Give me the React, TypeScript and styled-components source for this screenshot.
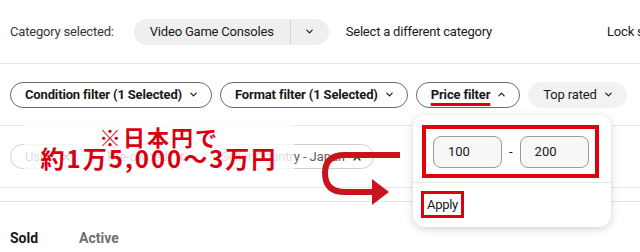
import React from 'react';
import styled, { createGlobalStyle } from 'styled-components';

const GlobalStyle = createGlobalStyle`
  html, body {
    margin: 0;
    padding: 0;
    background: #ffffff;
  }
  body {
    font-family: Roboto, "Liberation Sans", sans-serif;
    color: #191919;
  }
`;

const Page = styled.div`
  position: relative;
  width: 640px;
  height: 252px;
  overflow: hidden;
`;

const CategoryRow = styled.div`
  display: flex;
  align-items: center;
  height: 63px;
  padding: 0 10px;
  border-bottom: 1px solid #e5e5e5;
  white-space: nowrap;
  font-size: 13px;
  letter-spacing: -0.2px;
`;

const Label = styled.span`
  color: #363636;
  flex-shrink: 0;
`;

const CategoryPill = styled.div`
  display: flex;
  align-items: stretch;
  height: 26px;
  margin-left: 20px;
  flex-shrink: 0;
`;

const PillText = styled.span`
  display: flex;
  align-items: center;
  padding: 0 16px;
  background: #efefef;
  border-radius: 13px 0 0 13px;
  color: #191919;
`;

const PillToggle = styled.span`
  display: flex;
  align-items: center;
  justify-content: center;
  width: 38px;
  background: #efefef;
  border-left: 1px solid #d6d6d6;
  border-radius: 0 13px 13px 0;
`;

const LinkText = styled.span<{ $gap: number }>`
  margin-left: ${(p) => p.$gap}px;
  color: #191919;
  flex-shrink: 0;
`;

const FilterRow = styled.div`
  display: flex;
  align-items: center;
  gap: 8px;
  height: 61px;
  padding: 0 10px;
  border-bottom: 1px solid #e5e5e5;
  white-space: nowrap;
`;

const Chip = styled.button<{ $flat?: boolean }>`
  display: flex;
  align-items: center;
  gap: 7px;
  height: 26px;
  padding: 0 13px 0 14px;
  border: 1px solid ${(p) => (p.$flat ? '#f2f2f2' : '#6b6b6b')};
  border-radius: 13px;
  background: ${(p) => (p.$flat ? '#f2f2f2' : '#ffffff')};
  color: #191919;
  font-family: Roboto, "Liberation Sans", sans-serif;
  font-size: 13px;
  font-weight: ${(p) => (p.$flat ? 400 : 700)};
  letter-spacing: -0.15px;
  flex-shrink: 0;
`;

const Marked = styled.span`
  text-decoration: underline;
  text-decoration-color: #e0000b;
  text-decoration-thickness: 3px;
  text-underline-offset: 4px;
`;

const AppliedRow = styled.div`
  display: flex;
  align-items: center;
  gap: 9px;
  height: 61px;
  padding: 0 10px;
  border-bottom: 1px solid #e5e5e5;
  white-space: nowrap;
`;

const AppliedChip = styled.span`
  display: flex;
  align-items: center;
  gap: 7px;
  height: 25px;
  box-sizing: border-box;
  padding: 0 11px 0 14px;
  border: 1px solid #d0d0d0;
  border-radius: 13px;
  color: #5e5e5e;
  font-size: 13px;
  letter-spacing: -0.1px;
  flex-shrink: 0;
`;

const Tabs = styled.div`
  display: flex;
  gap: 41px;
  margin-top: 13px;
  padding: 28px 10px 0;
  border-top: 1px solid #e5e5e5;
  font-size: 14px;
  font-weight: 700;
  line-height: 16px;
`;

const Tab = styled.span<{ $active?: boolean }>`
  color: ${(p) => (p.$active ? '#191919' : '#707070')};
`;

const Popup = styled.div`
  position: absolute;
  left: 413px;
  top: 115px;
  width: 198px;
  height: 112px;
  box-sizing: border-box;
  background: #ffffff;
  border-radius: 12px;
  box-shadow: 0 2px 8px rgba(0, 0, 0, 0.18);
  padding-top: 10px;
`;

const RangeBox = styled.div`
  display: flex;
  align-items: center;
  gap: 7px;
  width: 177px;
  height: 53px;
  box-sizing: border-box;
  margin-left: 9px;
  padding: 0 4px 0 7px;
  border: 4px solid #e0000b;
`;

const PriceInput = styled.div`
  display: flex;
  align-items: center;
  width: 69px;
  height: 32px;
  box-sizing: border-box;
  padding-left: 14px;
  background: #f7f7f7;
  border: 1px solid #999999;
  border-radius: 8px;
  font-size: 13px;
  color: #191919;
`;

const Dash = styled.span`
  font-size: 13px;
  color: #191919;
`;

const Divider = styled.div`
  margin-top: 4px;
  height: 1px;
  background: #e5e5e5;
`;

const ApplyBox = styled.div`
  display: inline-flex;
  align-items: center;
  height: 27px;
  box-sizing: border-box;
  margin: 8px 0 0 8px;
  padding: 0 3px;
  border: 3px solid #e0000b;
  font-size: 13px;
  letter-spacing: -0.3px;
  color: #191919;
`;

const Note = styled.div`
  position: absolute;
  left: 24px;
  top: 114px;
  width: 270px;
  height: 66px;
  display: flex;
  flex-direction: column;
  align-items: center;
  justify-content: center;
  background: rgba(255, 255, 255, 0.78);
  color: #d7000f;
  font-family: "Noto Sans CJK JP", sans-serif;
  font-weight: 700;
  line-height: 22px;
`;

const NoteLine = styled.span<{ $size: number; $spacing: number }>`
  font-size: ${(p) => p.$size}px;
  letter-spacing: ${(p) => p.$spacing}px;
`;

const Arrow = styled.svg`
  position: absolute;
  left: 310px;
  top: 140px;
`;

const Chevron = ({ up = false, size = 9 }: { up?: boolean; size?: number }) => (
  <svg width={size} height={size} viewBox="0 0 10 10" fill="none">
    <path
      d={up ? 'M2 6.5L5 3.5L8 6.5' : 'M2 3.5L5 6.5L8 3.5'}
      stroke="#191919"
      strokeWidth="1.3"
      strokeLinecap="round"
      strokeLinejoin="round"
    />
  </svg>
);

const Cross = () => (
  <svg width="10" height="10" viewBox="0 0 10 10" fill="none">
    <path d="M2 2L8 8M8 2L2 8" stroke="#191919" strokeWidth="1.3" strokeLinecap="round" />
  </svg>
);

const App: React.FC = () => {
  return (
    <Page>
      <GlobalStyle />
      <CategoryRow>
        <Label>Category selected:</Label>
        <CategoryPill>
          <PillText>Video Game Consoles</PillText>
          <PillToggle>
            <Chevron />
          </PillToggle>
        </CategoryPill>
        <LinkText $gap={17}>Select a different category</LinkText>
        <LinkText $gap={115}>Lock selection</LinkText>
      </CategoryRow>

      <FilterRow>
        <Chip>
          Condition filter (1 Selected) <Chevron />
        </Chip>
        <Chip>
          Format filter (1 Selected) <Chevron />
        </Chip>
        <Chip>
          <Marked>Price filter</Marked> <Chevron up />
        </Chip>
        <Chip $flat>
          Top rated <Chevron />
        </Chip>
      </FilterRow>

      <AppliedRow>
        <AppliedChip>
          Used <Cross />
        </AppliedChip>
        <AppliedChip>
          Pre-owned <Cross />
        </AppliedChip>
        <AppliedChip>
          Seller Country - Japan <Cross />
        </AppliedChip>
      </AppliedRow>

      <Tabs>
        <Tab $active>Sold</Tab>
        <Tab>Active</Tab>
      </Tabs>

      <Note>
        <NoteLine $size={22} $spacing={2}>※日本円で</NoteLine>
        <NoteLine $size={24} $spacing={2}>約1万5,000〜3万円</NoteLine>
      </Note>

      <Arrow width="90" height="70" viewBox="0 0 90 70">
        <path
          d="M100 15 H35 Q15 15 15 33 Q15 52 35 52 H64"
          fill="none"
          stroke="#c8141c"
          strokeWidth="6"
        />
        <polygon points="62,39 79,52 62,65" fill="#c8141c" />
      </Arrow>

      <Popup>
        <RangeBox>
          <PriceInput>100</PriceInput>
          <Dash>-</Dash>
          <PriceInput>200</PriceInput>
        </RangeBox>
        <Divider />
        <ApplyBox>Apply</ApplyBox>
      </Popup>
    </Page>
  );
};

export default App;
